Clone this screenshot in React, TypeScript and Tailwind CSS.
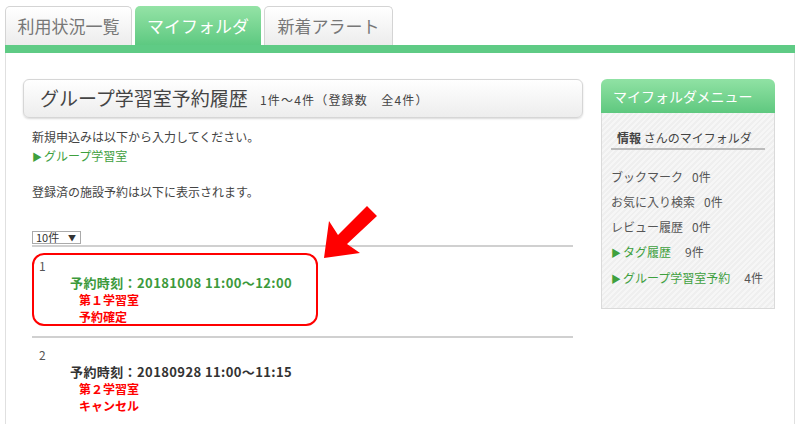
import React from "react";

const font = { fontFamily: '"Noto Sans CJK JP", "Noto Sans", sans-serif' };

type Reservation = {
    no: number;
    time: string;
    room: string;
    status: string;
    highlight?: boolean;
};

const reservations: Reservation[] = [
    { no: 1, time: "予約時刻：20181008 11:00〜12:00", room: "第１学習室", status: "予約確定", highlight: true },
    { no: 2, time: "予約時刻：20180928 11:00〜11:15", room: "第２学習室", status: "キャンセル" },
];

const menuItems = [
    { label: "ブックマーク", count: "0件" },
    { label: "お気に入り検索", count: "0件" },
    { label: "レビュー履歴", count: "0件" },
    { label: "タグ履歴", count: "9件", link: true },
    { label: "グループ学習室予約", count: "4件", link: true },
];

function Tab({ label, active, width }: { label: string; active?: boolean; width: string }) {
    return (
        <div
            className={
                active
                    ? `${width} h-[39px] flex items-center justify-center rounded-t-[5px] bg-gradient-to-b from-[#94e3a6] to-[#5dc981] text-white text-[17px]`
                    : `${width} h-[39px] flex items-center justify-center rounded-t-[5px] border border-b-0 border-[#d4d4d4] bg-gradient-to-b from-white to-[#ececec] text-[#777] text-[17px]`
            }
        >
            {label}
        </div>
    );
}

function Entry({ r }: { r: Reservation }) {
    return (
        <div
            className={
                r.highlight
                    ? "w-[286px] h-[73px] mt-[6px] rounded-[12px] border-[2.5px] border-[#ff0000] pl-[5px] pt-[3px]"
                    : "h-[80px] pl-[7px] pt-[9px]"
            }
        >
            <div className="text-[12px] leading-[16px] text-[#555]">{r.no}</div>
            <div className="pl-[31px] font-bold">
                <div
                    className={`text-[13px] leading-[17px] tracking-[0.4px] ${r.highlight ? "text-[#3c9a3c]" : "text-[#333]"}`}
                >
                    {r.time}
                </div>
                <div className="pl-[9px] text-[12px] leading-[17px] text-[#ff0000]">{r.room}</div>
                <div className="pl-[9px] text-[12px] leading-[17px] text-[#ff0000]">{r.status}</div>
            </div>
        </div>
    );
}

export default function App() {
    return (
        <div className="relative w-[800px] h-[424px] overflow-hidden bg-white" style={font}>
            {/* Tabs */}
            <div className="flex items-end gap-[3px] pl-[5px] pt-[6px]">
                <Tab label="利用状況一覧" width="w-[127px]" />
                <Tab label="マイフォルダ" width="w-[126px]" active />
                <Tab label="新着アラート" width="w-[129px]" />
            </div>
            <div className="mx-[5px] h-[8px] bg-[#5fcb85]" />

            {/* Content */}
            <div className="mx-[5px] flex h-[400px] border-x border-[#e0e0e0] pl-[17px] pr-[18px]">
                {/* Main column */}
                <div className="w-[560px] pt-[26px]">
                    <div className="flex h-[39px] items-center rounded-[6px] border border-[#d6d6d6] bg-gradient-to-b from-white to-[#ededed] pl-[16px] shadow-[0_1px_2px_rgba(0,0,0,0.15)]">
                        <span className="text-[19px] text-[#444]">グループ学習室予約履歴</span>
                        <span className="ml-[12px] pt-[2px] text-[12px] tracking-[1.2px] text-[#444]">1件～4件（登録数　全4件）</span>
                    </div>

                    <div className="pl-[9px] pr-[9px]">
                        <p className="mt-[9px] text-[12px] leading-[19px] text-[#444]">新規申込みは以下から入力してください。</p>
                        <p className="text-[12px] leading-[19px] text-[#3ea03e]">
                            <span className="mr-[2px] text-[10px]">▶</span>グループ学習室
                        </p>
                        <p className="mt-[16px] text-[12px] leading-[19px] text-[#444]">登録済の施設予約は以下に表示されます。</p>

                        <div className="mt-[30px] flex h-[13px] w-[49px] items-center justify-between border border-[#aaa] bg-white pl-[3px] pr-[4px] text-[11px] leading-none text-[#333]">
                            <span>10件</span>
                            <span className="text-[8px]">▼</span>
                        </div>
                        <div className="mt-[1px] h-[2px] w-[541px] bg-[#d0d0d0]" />

                        <Entry r={reservations[0]} />
                        <div className="mt-[10px] h-[2px] w-[541px] bg-[#d0d0d0]" />
                        <Entry r={reservations[1]} />
                    </div>
                </div>

                {/* Side menu */}
                <div className="ml-[18px] w-[174px] pt-[26px]">
                    <div className="flex h-[34px] items-center rounded-t-[6px] bg-gradient-to-b from-[#90e2a4] to-[#5ec87f] pl-[12px] text-[14px] text-white">
                        マイフォルダメニュー
                    </div>
                    <div className="h-[196px] border border-t-0 border-[#dadada] bg-[repeating-linear-gradient(135deg,#efefef_0px,#efefef_2px,#f6f6f6_2px,#f6f6f6_4px)] px-[9px] pt-[16px]">
                        <div className="border-b-2 border-[#bbb] pb-[2px] pl-[6px] text-[12px] leading-[17px] text-[#444]">
                            <span className="font-bold">情報</span> さんのマイフォルダ
                        </div>
                        <div className="mt-[18px] flex flex-col gap-[8px]">
                            {menuItems.map((m) => (
                                <div key={m.label} className="flex text-[12px] leading-[17px] text-[#555]">
                                    {m.link ? (
                                        <span className="text-[#3ea03e]">
                                            <span className="mr-[2px] text-[10px]">▶</span>
                                            {m.label}
                                        </span>
                                    ) : (
                                        <span>{m.label}</span>
                                    )}
                                    <span className={m.link ? "ml-[14px]" : "ml-[9px]"}>{m.count}</span>
                                </div>
                            ))}
                        </div>
                    </div>
                </div>
            </div>

            {/* Annotation arrow */}
            <svg className="pointer-events-none absolute left-0 top-0" width="800" height="424" viewBox="0 0 800 424">
                <polygon
                    points="367,206 377,216 347,244 360,253 324,258 329,221 338,235"
                    fill="#ff0000"
                />
            </svg>
        </div>
    );
}
